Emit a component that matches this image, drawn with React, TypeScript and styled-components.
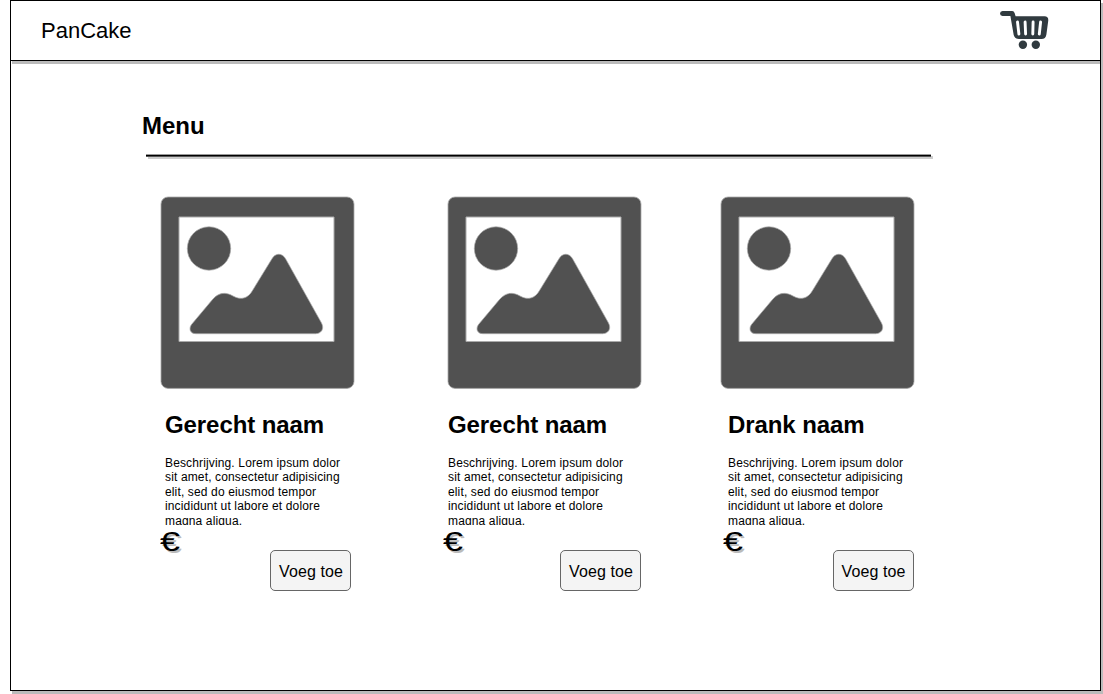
import React from 'react';
import styled, { createGlobalStyle } from 'styled-components';

const GlobalStyle = createGlobalStyle`
  *, *::before, *::after { box-sizing: border-box; }
  body {
    margin: 0;
    background: #fff;
    color: #000;
    font-family: "Liberation Sans", Arial, sans-serif;
  }
`;

const Page = styled.div`
  height: 694px;
  padding-left: 10px;
  overflow: hidden;
`;

const Window = styled.div`
  width: 1091px;
  height: 691px;
  border: 1px solid #000;
  background: #fff;
  box-shadow: 2px 3px 0 #bbb;
`;

const Header = styled.header`
  display: flex;
  align-items: center;
  justify-content: space-between;
  height: 60px;
  padding: 0 50px 0 30px;
  border-bottom: 1px solid #000;
  box-shadow: 1px 3px 0 #bbb;
  clip-path: inset(0 0 -3px 0);
`;

const Brand = styled.span`
  font-size: 22px;
  line-height: 26px;
`;

const CartButton = styled.a`
  display: block;
  width: 50px;
  height: 41px;
`;

const Main = styled.main`
  padding: 51px 0 0 131px;
`;

const PageTitle = styled.h1`
  margin: 0;
  font-size: 24px;
  line-height: 28px;
`;

const Rule = styled.hr`
  width: 785px;
  height: 3px;
  margin: 14px 0 0 4px;
  border: 0;
  background: linear-gradient(#999 0 1px, #000 1px 2px, #555 2px 3px);
  box-shadow: 2px 2px 0 #ccc;
`;

const Menu = styled.section`
  display: grid;
  grid-template-columns: 287px 273px 195px;
  margin: 39px 0 0 18px;
`;

const Card = styled.article`
  display: flex;
  flex-direction: column;
  width: 195px;
`;

const Photo = styled.svg`
  display: block;
  width: 195px;
  height: 194px;
`;

const Details = styled.div<{ $indent: number }>`
  padding-left: ${(p) => p.$indent}px;
`;

const DishName = styled.h2`
  margin: 21px 0 0;
  font-size: 24px;
  line-height: 28px;
  letter-spacing: -0.08px;
  white-space: nowrap;
`;

const Description = styled.p`
  width: 184px;
  height: 69px;
  margin: 17px 0 0;
  overflow: hidden;
  font-size: 12px;
  line-height: 14.4px;
  letter-spacing: 0.14px;
`;

const Footer = styled.div<{ $indent: number }>`
  display: flex;
  justify-content: space-between;
  align-items: flex-start;
  height: 66px;
  margin-left: ${(p) => p.$indent}px;
`;

const Currency = styled.span`
  font-size: 28px;
  line-height: 33px;
  transform: scaleX(1.28);
  transform-origin: left;
  text-shadow: 1.5px 2px 0 #bbb;
`;

const AddButton = styled.button<{ $gap: number }>`
  width: 81px;
  height: 41px;
  margin: 25px ${(p) => p.$gap}px 0 0;
  padding: 2px 0 0 1px;
  border: 1px solid #666;
  border-radius: 5px;
  background: #f4f4f4;
  color: #000;
  font: 16px "Liberation Sans", Arial, sans-serif;
  letter-spacing: 0.1px;
  white-space: nowrap;
`;

const Cart = () => (
  <svg width="50" height="41" viewBox="0 0 50 41" fill="#303a3f">
    <path d="M2.5 0.9H12.2Q14 0.9 14.6 3L15.6 6.2H44.5Q48.8 6.2 48.2 11L46.4 24.5Q45.7 29 41.5 29H19Q14.8 29 13.7 25L10.4 6H2.5Q0 5.8 0 3.4Q0.1 1.1 2.5 0.9Z" />
    <path
      d="M17.5 12L18.9 24M25.1 12L25.6 24M33.1 12L32.8 24M40.6 12L39.3 24"
      fill="none"
      stroke="#fff"
      strokeWidth="2.9"
      strokeLinecap="round"
    />
    <circle cx="22.9" cy="34.7" r="4.2" />
    <circle cx="35.8" cy="34.7" r="4.2" />
  </svg>
);

const PhotoPlaceholder = () => (
  <Photo viewBox="0 0 195 194">
    <rect x="1" y="1" width="193" height="191.4" rx="7" fill="#515151" stroke="#aaa" strokeWidth="0.8" />
    <path d="M19 21H174V145.5H19Z" fill="#fff" stroke="#aaa" strokeWidth="1" />
    <circle cx="49" cy="52.5" r="21.7" fill="#515151" stroke="#aaa" strokeWidth="0.7" />
    <path
      d="M31.5 128.5L52.5 103.5C59 96 66 96 73 100C81 104.5 88 102.5 92.5 94.5L111.5 63.5C115 56.5 122.5 56.5 126 63.5L161.5 127C164.5 132.5 161.5 137.7 155.5 137.7H36C30 137.7 28.5 132.5 31.5 128.5Z"
      fill="#515151"
      stroke="#aaa"
      strokeWidth="0.7"
    />
  </Photo>
);

const LOREM =
  'Beschrijving. Lorem ipsum dolor sit amet, consectetur adipisicing elit, sed do eiusmod tempor incididunt ut labore et dolore magna aliqua.';

const items = [
  { name: 'Gerecht naam', indent: 5, gap: 4 },
  { name: 'Gerecht naam', indent: 1, gap: 1 },
  { name: 'Drank naam', indent: 8, gap: 1.5 },
];

export default function App() {
  return (
    <>
      <GlobalStyle />
      <Page>
        <Window>
          <Header>
            <Brand>PanCake</Brand>
            <CartButton aria-label="Winkelwagen">
              <Cart />
            </CartButton>
          </Header>
          <Main>
            <PageTitle>Menu</PageTitle>
            <Rule />
            <Menu>
              {items.map((item, i) => (
                <Card key={i}>
                  <PhotoPlaceholder />
                  <Details $indent={item.indent}>
                    <DishName>{item.name}</DishName>
                    <Description>{LOREM}</Description>
                  </Details>
                  <Footer $indent={item.indent - 5}>
                    <Currency>€</Currency>
                    <AddButton $gap={item.gap}>Voeg toe</AddButton>
                  </Footer>
                </Card>
              ))}
            </Menu>
          </Main>
        </Window>
      </Page>
    </>
  );
}
